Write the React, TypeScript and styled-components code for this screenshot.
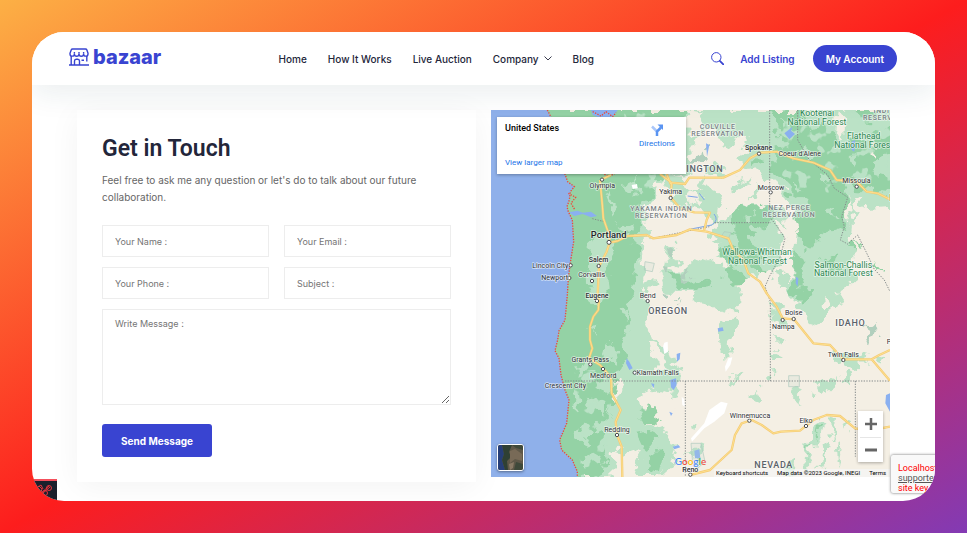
import React from "react";
import styled, { createGlobalStyle } from "styled-components";

const GlobalStyle = createGlobalStyle`
  *, *::before, *::after { box-sizing: border-box; }
  body { margin: 0; font-family: Inter, "Liberation Sans", sans-serif; }
`;

const brand = "#3944d1";
const ink = "#23263a";

const Backdrop = styled.div`
  display: flex;
  min-height: 100vh;
  padding: 32px;
  background: linear-gradient(to bottom right, #fcb045, #fd1d1d, #833ab4);
`;

const Frame = styled.div`
  position: relative;
  flex: 1;
  min-width: 0;
  overflow: hidden;
  border-radius: 32px;
  background: #fff;
`;

const Header = styled.header`
  position: relative;
  z-index: 1;
  display: flex;
  align-items: center;
  justify-content: space-between;
  height: 53px;
  padding: 0 38px 0 37px;
  background: #fff;
  box-shadow: 0 8px 30px rgba(20, 70, 80, 0.09);
`;

const Logo = styled.a`
  display: flex;
  align-items: center;
  gap: 4px;
  margin-bottom: 3px;
  color: ${brand};
  font: 800 20px/26px Inter, sans-serif;
  text-decoration: none;
`;

const Nav = styled.nav`
  display: flex;
  align-items: center;
  gap: 21px;
`;

const NavLink = styled.a`
  display: flex;
  align-items: center;
  gap: 5px;
  color: ${ink};
  font: 500 10px/16px Inter, sans-serif;
  text-decoration: none;
`;

const Actions = styled.div`
  display: flex;
  align-items: center;
`;

const IconButton = styled.button`
  display: flex;
  margin-right: 16px;
  padding: 0;
  border: 0;
  background: none;
  color: ${brand};
`;

const ListingLink = styled(NavLink)`
  margin-right: 18px;
  color: ${brand};
  font-weight: 600;
`;

const AccountButton = styled.button`
  height: 27px;
  padding: 0 13px;
  border: 0;
  border-radius: 14px;
  background: ${brand};
  color: #fff;
  font: 600 10px/16px Inter, sans-serif;
`;

const Main = styled.main`
  display: grid;
  grid-template-columns: 1fr 1fr;
  align-items: start;
  gap: 15px;
  padding: 25px 45px 19px;
`;

const ContactCard = styled.form`
  padding: 25px;
  background: #fff;
  box-shadow: 0 5px 30px rgba(0, 0, 0, 0.05);
`;

const Title = styled.h1`
  margin: 0;
  color: ${ink};
  font: 600 23px/28px Roboto, sans-serif;
`;

const Intro = styled.p`
  margin: 9px 0 19px;
  color: #666;
  font-size: 10px;
  line-height: 17px;
`;

const Fields = styled.div`
  display: grid;
  grid-template-columns: 1fr 1fr;
  gap: 10px 15px;
`;

const Field = styled.input`
  width: 100%;
  min-width: 0;
  height: 32px;
  padding: 0 12px;
  border: 1px solid #ededed;
  background: #fff;
  font: 9px/16px Inter, sans-serif;
  &::placeholder { color: #757575; }
`;

const MessageField = styled.textarea`
  grid-column: 1 / -1;
  display: block;
  width: 100%;
  height: 96px;
  padding: 6px 12px;
  border: 1px solid #ededed;
  background: #fff;
  font: 9px/16px Inter, sans-serif;
  resize: vertical;
  &::placeholder { color: #757575; }
`;

const SendButton = styled.button`
  display: block;
  height: 33px;
  margin-top: 19px;
  padding: 0 19px;
  border: 0;
  border-radius: 3px;
  background: ${brand};
  color: #fff;
  font: 700 10px/16px Inter, sans-serif;
`;

const MapPanel = styled.section`
  position: relative;
  overflow: hidden;
  font-family: Roboto, sans-serif;
`;

const MapDrawing = styled.svg`
  display: block;
  width: 100%;
  height: auto;
  font-family: Roboto, sans-serif;
`;

const PlaceCard = styled.div`
  position: absolute;
  top: 7px;
  left: 6px;
  display: flex;
  align-items: flex-start;
  justify-content: space-between;
  width: 189px;
  height: 57px;
  padding: 6px 11px 6px 8px;
  background: #fff;
  box-shadow: 0 1px 3px rgba(0, 0, 0, 0.3);
`;

const PlaceText = styled.div`
  display: flex;
  flex-direction: column;
  align-items: flex-start;
  justify-content: space-between;
  height: 100%;
`;

const PlaceName = styled.strong`
  font-size: 9px;
  font-weight: 500;
  line-height: 11px;
`;

const MapLink = styled.a`
  display: flex;
  flex-direction: column;
  align-items: center;
  gap: 2px;
  color: #1a73e8;
  font-size: 8px;
  line-height: 10px;
  text-decoration: none;
`;

const ZoomControls = styled.div`
  position: absolute;
  right: 7px;
  bottom: 15px;
  display: grid;
  grid-template-rows: 1fr 1fr;
  width: 25px;
  height: 51px;
  padding: 0 2px;
  background: #fff;
  box-shadow: 0 1px 3px rgba(0, 0, 0, 0.3);
`;

const ZoomButton = styled.button`
  display: grid;
  place-items: center;
  padding: 0;
  border: 0;
  background: none;
  color: #666;
  & + & { border-top: 1px solid #e6e6e6; }
`;

const SatelliteButton = styled.button`
  position: absolute;
  left: 6px;
  bottom: 6px;
  display: block;
  width: 27px;
  height: 27px;
  padding: 0;
  overflow: hidden;
  border: 1px solid #fff;
  border-radius: 3px;
  box-shadow: 0 1px 3px rgba(0, 0, 0, 0.4);
`;

const GoogleLink = styled.a`
  position: absolute;
  bottom: 10px;
  left: 50%;
  transform: translateX(-50%);
  font: 500 10px/12px Lato, sans-serif;
  text-decoration: none;
  text-shadow: 0 0 1px #fff;
`;

const Letter = styled.span<{ $color: string }>`
  color: ${(p) => p.$color};
`;

const Attribution = styled.div`
  position: absolute;
  right: 0;
  bottom: 0;
  display: flex;
  gap: 9px;
  padding: 0 4px 0 2px;
  background: rgba(245, 245, 245, 0.75);
  font-size: 6px;
  line-height: 8px;
`;

const PlainButton = styled.button`
  padding: 0;
  border: 0;
  background: none;
  color: #000;
  font: inherit;
`;

const TermsLink = styled.a`
  color: #000;
  text-decoration: none;
`;

const CaptchaBadge = styled.aside`
  position: absolute;
  right: -170px;
  bottom: 8px;
  width: 214px;
  height: 38px;
  padding: 8px 7px 0;
  overflow: hidden;
  border-radius: 2px;
  background: #f9f9f9;
  box-shadow: 0 0 3px #666;
  color: #f00;
  font: 9px/10px Roboto, sans-serif;
`;

const CaptchaLink = styled.a`
  display: block;
  color: #555;
`;

const DebugBadge = styled.button`
  position: absolute;
  left: 0;
  bottom: 0;
  display: block;
  width: 25px;
  height: 22px;
  padding: 0;
  border: 0;
  border-top: 2px solid #f4505c;
  background: #1b202c;
`;

function StoreIcon() {
  return (
    <svg width="20" height="18" viewBox="0 0 20 18" fill="none" stroke="currentColor" strokeWidth="1.4" strokeLinejoin="round" aria-hidden="true">
      <path d="M3.5 1h13q1 0 1.4 1L19 5.2v.7a2.2 2.2 0 0 1-4.4 0 2.2 2.2 0 0 1-4.6 0 2.2 2.2 0 0 1-4.6 0 2.2 2.2 0 0 1-4.4 0v-.7L2.2 2q.4-1 1.3-1Z" />
      <path d="M5.4 5.4V4M10 5.4V4M14.6 5.4V4M2.2 8v8.8M17.8 8v5.500M0 17h20M5.5 17v-4q0-1.800 1.700-1.800h1.600q1.700 0 1.700 1.800v4M12.500 12.300h2.500" />
    </svg>
  );
}

function SearchIcon() {
  return (
    <svg width="13" height="13" viewBox="0 0 13 13" fill="none" stroke="currentColor" aria-hidden="true">
      <circle cx="5.300" cy="5.300" r="4.700" strokeWidth="1" />
      <path d="m8.800 8.800 3.500 3.500" strokeWidth="1.800" strokeLinecap="round" />
    </svg>
  );
}

const landLight = [
  "M60 0H600L640 60 590 130 600 190 520 200 500 240 470 300 480 370 450 400 458 480 500 520 460 545 466 640 484 690 540 720 572 800 560 860 490 836 440 860 455 920 520 960 560 1010 545 1060 500 1101H60Z",
  "M832 0H1240V290L1127 300 1100 262 1085 330 1077 400 1157 480 1127 490 1050 540 1027 600 957 650 917 585 890 510 915 420 925 340 880 250 830 205 800 176 760 180 745 150 777 96 750 0Z",
  "M590 0H750L770 70 740 80 720 110 690 100 670 60 640 50 610 20Z",
  "M515 195 570 200 590 245 650 235 655 300 600 290 570 305 540 270Z",
  "M640 190 660 230 690 290 680 350 650 350 640 290Z",
  "M677 350 730 300 760 290 860 285 890 320 885 400 860 480 800 470 790 520 740 512 700 450 650 430Z",
  "M497 470 570 492 620 445 690 470 750 530 755 580 700 605 640 590 600 545 520 545Z",
  "M530 400 560 395 545 450 570 465 520 480Z",
  "M837 570 868 600 900 640 870 655 845 640Z M850 672 865 695 880 705 850 715Z M842 722 875 738 860 760 840 750Z M838 776 850 780 846 805 838 800Z",
  "M1020 720 1060 735 1130 730 1100 790 1055 770 1030 750Z M1157 735 1190 745 1170 775Z M1057 790 1075 785 1080 815 1060 810Z",
  "M990 820 1040 795 1020 830 995 848 965 840Z M910 830 935 835 925 890 915 870 900 840Z",
  "M690 650 725 610 735 640 720 720 695 745 690 700Z M780 845 805 840 790 880 778 865Z M720 795 740 800 725 818Z",
  "M975 935 1000 930 985 985 965 1000 960 1060 940 1085 950 1000Z M1020 925 1035 930 1030 990 1015 960Z M995 1010 1012 990 1000 1075 985 1085Z M1060 925 1080 930 1072 965Z M1040 1010 1055 1000 1045 1070Z",
  "M603 945 615 930 610 960Z M598 1030 640 1000 625 1060Z M880 1070 910 1050 905 1095 880 1100Z",
  "M840 450 870 440 850 500 835 520Z M860 500 875 480 900 530 880 550Z M1140 560 1170 560 1180 590 1150 580Z",
  "M750 210 770 205 740 245 720 240Z M670 150 700 180 680 200 640 180Z M795 225 810 245 785 265Z",
];

const landDark = [
  "M60 0H590L560 80 530 190 500 215 480 260 450 300 470 338 434 390 445 440 425 500 430 560 408 600 414 650 390 700 400 760 370 805 390 860 362 890 365 930 340 985 350 1040 320 1101H60Z",
  "M833 0H940L960 60 1010 40 1030 90 1060 110 1090 80 1130 110 1150 60 1240 70V130L1130 150 1160 200 1240 210V250L1110 240 1080 200 1060 240 1080 290 1050 350 1000 370 960 410 925 380 910 320 950 290 900 260 870 200 835 175 850 130 900 105 860 70Z",
  "M730 300 780 290 850 285 860 320 810 350 780 340 775 380 800 430 820 480 790 485 750 430 710 460 690 440 740 390 720 350Z",
  "M540 500 575 495 600 515 650 500 660 530 600 540 560 530Z M720 465 750 480 760 515 720 520 700 495Z",
  "M900 460 920 430 960 450 930 500 940 540 905 550Z M1060 390 1110 400 1150 450 1175 480 1130 470Z M1000 450 1030 430 1050 480 1010 490Z",
  "M905 505 930 540 965 545 940 590 920 580Z M1100 0H1170L1140 40 1110 35Z M780 150 820 140 790 165Z",
  "M440 900 480 885 500 930 450 925Z M430 965 480 960 500 1000 455 1010Z M470 1030 520 1035 510 1080 465 1090Z",
  "M750 360 800 370 770 410Z M975 950 990 940 970 990Z M955 1010 962 1000 950 1050Z",
];

const lightGaps = [
  "M300 395 360 372 368 440 345 480 350 550 330 600 304 575 292 500Z",
  "M292 655 322 650 310 680Z M340 740 355 695 370 720 378 760Z M258 770 290 760 300 790 250 800Z",
  "M310 810 350 800 365 840 330 850Z M290 860 330 870 340 910 300 890Z M325 930 360 900 370 960 350 990 310 970Z M240 860 262 850 270 900 245 880Z",
  "M380 350 420 340 405 375Z M390 220 430 200 445 240 410 250Z M385 600 410 585 398 630Z M350 250 375 290 365 320Z",
  "M910 120 960 130 950 160Z M980 190 1020 200 1010 230 985 220Z M900 220 940 240 920 260Z M1080 130 1110 150 1090 180Z M870 20 890 40 880 60Z M1000 300 1030 290 1040 330Z",
  "M760 320 790 315 775 335Z M270 950 300 960 290 1010 260 990Z M280 1040 330 1030 340 1060 290 1070Z",
];

const sandGaps = [
  "M588 0 640 8 625 60 590 90Z M610 100 740 115 700 150 600 165Z",
  "M362 820 382 815 392 860 370 870Z M362 1020 380 1010 400 1040 430 1020 445 1050 425 1101H365Z",
  "M1060 550 1070 530 1100 560 1110 590 1060 600Z M1090 400 1150 420 1165 520 1197 540V600L1130 600 1080 520Z",
  "M1040 10 1060 30 1055 80 1035 70Z M1145 100 1160 110 1150 135Z M1075 260 1085 300 1070 350 1058 320Z",
  "M997 570 1010 555 1020 600 1000 600Z M480 430 490 460 470 520 465 480Z M470 700 500 710 530 770 500 790Z M500 850 550 880 560 930 520 900Z",
  "M870 340 890 350 880 440 860 430Z M580 250 620 255 630 285 590 280Z M640 400 690 400 700 430 650 450Z",
];

const reserve = [
  "M590 160 640 118 648 150 620 162Z M548 395 556 400 550 430 535 450 530 430Z M525 465 545 475 535 500 520 495Z",
  "M515 545 540 550 530 570 518 560Z M1120 650 1150 630 1160 660 1140 700 1130 690 1145 665Z M585 480 598 485 590 520 580 510Z M535 570 560 570 555 582Z",
];

const coast =
  "M169 0 200 60 215 140 222 193 230 215 250 230 238 245 235 270 228 290 232 305 244 330 248 395 237 465 232 505 229 555 222 630 204 662 200 690 192 722 204 745 210 795 222 840 234 870 227 940 206 990 212 1020 244 1050 259 1085 259 1101";

const roads = [
  "M327 210 334 285 337 325 353 370 357 395 347 425 324 470 320 555 324 570 322 600 307 620 297 650 297 690 304 715 294 745 327 765 360 802 362 850 389 900 374 935 378 975 392 1010 394 1101",
  "M355 398 380 393 410 378 467 375 487 385 515 381 557 375 597 358 647 365 712 385 727 420 757 450 772 490 807 515 827 550 857 590 875 625 909 628 967 700 1017 705 1057 748 1142 748 1165 735 1197 720",
  "M1142 748 1197 812",
  "M507 192 542 218 582 222 595 203 697 203 747 180 777 145 807 128 857 125 907 145 967 158 1017 180 1037 210 1097 215 1127 245 1160 250 1197 268",
  "M360 195 330 209 M542 218 539 262 567 295 610 307 657 308 647 330 639 362 M539 222 527 192",
  "M597 1095 657 1080 722 1020 732 975 752 940 782 930 812 945 847 970 870 965 927 962 967 930 1007 915 1047 918 1092 955 1127 960 1160 957 1197 950",
];

const borders = [
  "M222 813H1197 M836 0V320L860 352 882 385 868 440 835 500 822 530 838 575V813",
  "M920 0V90L955 150 1010 195 1030 235 1070 262 1052 320 1060 350 1048 390 1070 402 1100 375 1125 425 1150 478 1180 510 1197 545",
  "M671 338H840 M583 813V1101 M1093 813V1040 M357 370 340 335 300 325 M487 385 557 370 655 350",
];

interface Place {
  name: string;
  x: number;
  y: number;
  marker?: [number, number];
  prominent?: boolean;
}

const places: Place[] = [
  { name: "Olympia", x: 334, y: 234, marker: [333, 209] },
  { name: "Yakima", x: 539, y: 253, marker: [539, 264] },
  { name: "Spokane", x: 803, y: 121, marker: [804, 131], prominent: true },
  { name: "Coeur d'Alene", x: 926, y: 137 },
  { name: "Missoula", x: 1096, y: 219, marker: [1097, 230] },
  { name: "Moscow", x: 840, y: 239, marker: [839, 247] },
  { name: "Salem", x: 323, y: 457, marker: [323, 468], prominent: true },
  { name: "Lincoln City", x: 178, y: 473, marker: [239, 466] },
  { name: "Newport", x: 191, y: 511, marker: [235, 504] },
  { name: "Corvallis", x: 302, y: 502, marker: [303, 513] },
  { name: "Eugene", x: 318, y: 563, marker: [318, 573], prominent: true },
  { name: "Bend", x: 470, y: 563, marker: [470, 573] },
  { name: "Grants Pass", x: 298, y: 755, marker: [298, 763] },
  { name: "Medford", x: 337, y: 803, marker: [336, 777] },
  { name: "Klamath Falls", x: 500, y: 796, marker: [431, 788] },
  { name: "Crescent City", x: 223, y: 834 },
  { name: "Redding", x: 378, y: 965, marker: [378, 975] },
  { name: "Boise", x: 908, y: 616, marker: [908, 627] },
  { name: "Nampa", x: 877, y: 656, marker: [875, 630] },
  { name: "Twin Falls", x: 1057, y: 741, marker: [1057, 750] },
  { name: "Winnemucca", x: 777, y: 924, marker: [775, 932] },
  { name: "Elko", x: 945, y: 940, marker: [945, 948] },
  { name: "Reno", x: 598, y: 1085, marker: [598, 1094], prominent: true },
];

const regions: [string, number, number][] = [
  ["COLVILLE", 680, 58],
  ["RESERVATION", 680, 79],
  ["YAKAMA INDIAN", 511, 303],
  ["RESERVATION", 511, 324],
  ["NEZ PERCE", 895, 299],
  ["RESERVATION", 894, 320],
  ["INDI", 1172, 8],
  ["RESERV", 1160, 29],
];

const forests: [string, number, number][] = [
  ["Kootenai", 978, 18],
  ["National Forest", 978, 45],
  ["Flathead", 1118, 87],
  ["National Fores", 1114, 113],
  ["Wallowa-Whitman", 798, 435],
  ["National Forest", 799, 461],
  ["Salmon-Challis", 1057, 473],
  ["National Forest", 1057, 499],
  ["H", 1203, 273],
];

const states: [string, number, number][] = [
  ["WASHINGTON", 599, 186],
  ["OREGON", 531, 613],
  ["IDAHO", 1078, 649],
  ["NEVADA", 848, 1073],
];

function RegionMap() {
  return (
    <MapDrawing viewBox="0 0 1197 1101" role="img" aria-label="Map of the north-western United States">
      <defs>
        <filter id="rough" x="0" y="0" width="1240" height="1101" filterUnits="userSpaceOnUse" colorInterpolationFilters="sRGB">
          <feTurbulence type="fractalNoise" baseFrequency="0.025" numOctaves="3" seed="7" />
          <feDisplacementMap in="SourceGraphic" scale="64" xChannelSelector="R" yChannelSelector="G" />
        </filter>
        <filter id="relief" x="0" y="0" width="1197" height="1101" filterUnits="userSpaceOnUse" colorInterpolationFilters="sRGB">
          <feTurbulence type="fractalNoise" baseFrequency="0.022" numOctaves="3" seed="21" />
          <feColorMatrix values="0 0 0 0 0.73  0 0 0 0 0.886  0 0 0 0 0.776  14 0 0 0 -8.4" />
          <feComposite in2="SourceAlpha" operator="in" />
        </filter>
      </defs>
      <rect width="1197" height="1101" fill="#f4efe4" />
      <g filter="url(#rough)">
        <path d={landLight.join("")} fill="#bbe2c6" />
        <path d={landDark.join("")} fill="#94d2a5" />
        <path d={lightGaps.join("")} fill="#bbe2c6" />
        <path d={sandGaps.join("")} fill="#f4efe4" />
        <path d={reserve.join("")} fill="#b1cfbd" />
      </g>
      <path d="M850 0H1197V220L1060 240 960 270 850 180ZM400 0H500V190L440 300 400 300ZM250 780 370 780 340 1101H270Z" filter="url(#relief)" />
      <path d={coast + "H0V0Z"} fill="#8fb0ea" />
      <g fill="#8ab0f0">
        <path d="M300 0H380L365 22 330 25 305 15ZM880 70 905 50 900 62 912 72 895 88ZM1082 95 1092 90 1090 125 1082 120ZM232 307 260 302 275 308 300 305 318 318 300 322 275 312 250 318ZM407 745 415 755 425 775 415 780 405 760ZM557 732 568 728 566 748 558 755ZM538 810 555 805 557 825 548 840 540 832ZM518 708 528 710 526 728 518 720ZM610 1022 625 1018 628 1045 612 1045ZM1185 855 1197 850V905L1183 880ZM680 655 695 652 698 662 682 665ZM545 1010 562 1005 568 1012 550 1018ZM915 500 922 505 920 530 914 520ZM480 820 490 822 488 835ZM645 100 655 105 648 140ZM535 905 545 910 540 918Z" />
      </g>
      <path d="M669 312Q685 330 662 345L600 357M590 258 620 262M625 250 640 270" fill="none" stroke="#7ba3e8" strokeWidth="3" />
      <path d="M600 985 640 940 655 900 690 875 710 880 700 910 670 935 640 955 603 995ZM702 770 712 745 724 742 718 765 704 785ZM516 710 520 698 530 695 531 725 520 732ZM572 860 580 868 582 890 574 885ZM422 225 438 222 440 235 425 237Z" fill="#fff" />
      <path d="M893 797H925V830H893ZM600 1000H630L642 1055 620 1075 605 1060ZM462 455 490 460 484 485 460 480ZM690 380 700 365 720 368 710 390Z" fill="#bcd8cc" fillOpacity="0.2" stroke="#adc9bd" strokeWidth="2" />
      <path d={coast} fill="none" stroke="#ed4a3c" strokeWidth="4" strokeDasharray="4 4" />
      <path d="M305 5 330 18 345 5 365 20 375 8M340 193 355 199 372 190M232 250 254 262 240 280 252 300" fill="none" stroke="#ed4a3c" strokeWidth="4" strokeDasharray="4 4" />
      <path d={borders.join("")} fill="none" stroke="#858b8b" strokeWidth="3" strokeDasharray="4 4" />
      <g fill="none" strokeLinejoin="round">
        <path d={roads.join("")} stroke="#f5cb74" strokeWidth="7" />
        <path d={roads.join("")} stroke="#fde08f" strokeWidth="3" />
      </g>
      <g fill="#fff" stroke="#4c4f52" strokeWidth="3">
        {places.map(({ name, marker }) => marker && <circle key={name} cx={marker[0]} cy={marker[1]} r="5" />)}
        <circle cx="354" cy="397" r="6" />
      </g>
      <g textAnchor="middle" paintOrder="stroke" stroke="#ffffff" strokeOpacity="0.6" strokeWidth="5" strokeLinejoin="round">
        {states.map(([name, x, y]) => (
          <text key={name} x={x} y={y} fontSize="27" letterSpacing="2" fontWeight="500" fill="#5b626a">{name}</text>
        ))}
        {regions.map(([name, x, y]) => (
          <text key={name + y} x={x} y={y} fontSize="21" letterSpacing="2" fontWeight="500" fill="#7b8286">{name}</text>
        ))}
        {forests.map(([name, x, y]) => (
          <text key={name + y} x={x} y={y} fontSize="26" fill="#2c8751">{name}</text>
        ))}
        {places.map(({ name, x, y, prominent }) => (
          <text key={name} x={x} y={y} fontSize="21" fontWeight={prominent ? 500 : 400} fill="#303236">{name}</text>
        ))}
        <text x="353" y="385" fontSize="28" fontWeight="500" fill="#25272a">Portland</text>
        <text x="1194" y="703" fontSize="21" fill="#303236">P</text>
      </g>
    </MapDrawing>
  );
}

const googleLetters: [string, string][] = [
  ["G", "#4285f4"], ["o", "#ea4335"], ["o", "#fbbc05"], ["g", "#4285f4"], ["l", "#34a853"], ["e", "#ea4335"],
];

export default function App() {
  return (
    <Backdrop>
      <GlobalStyle />
      <Frame>
        <Header>
          <Logo href="#"><StoreIcon />bazaar</Logo>
          <Nav>
            <NavLink href="#">Home</NavLink>
            <NavLink href="#">How It Works</NavLink>
            <NavLink href="#">Live Auction</NavLink>
            <NavLink href="#">
              Company
              <svg width="8" height="5" viewBox="0 0 8 5" fill="none" stroke="currentColor" strokeWidth="0.9" aria-hidden="true"><path d="m.5.5 3.500 3.500L7.500.5" /></svg>
            </NavLink>
            <NavLink href="#">Blog</NavLink>
          </Nav>
          <Actions>
            <IconButton type="button" aria-label="Search"><SearchIcon /></IconButton>
            <ListingLink href="#">Add Listing</ListingLink>
            <AccountButton type="button">My Account</AccountButton>
          </Actions>
        </Header>
        <Main>
          <ContactCard onSubmit={(e) => e.preventDefault()}>
            <Title>Get in Touch</Title>
            <Intro>Feel free to ask me any question or let's do to talk about our future collaboration.</Intro>
            <Fields>
              <Field aria-label="Your Name" placeholder="Your Name :" />
              <Field aria-label="Your Email" type="email" placeholder="Your Email :" />
              <Field aria-label="Your Phone" type="tel" placeholder="Your Phone :" />
              <Field aria-label="Subject" placeholder="Subject :" />
              <MessageField aria-label="Write Message" placeholder="Write Message :" />
            </Fields>
            <SendButton type="submit">Send Message</SendButton>
          </ContactCard>
          <MapPanel aria-label="Location">
            <RegionMap />
            <PlaceCard>
              <PlaceText>
                <PlaceName>United States</PlaceName>
                <MapLink href="#">View larger map</MapLink>
              </PlaceText>
              <MapLink href="#">
                <svg width="14" height="14" viewBox="0 0 14 14" fill="none" aria-hidden="true">
                  <path d="M2 3.500 6.500 8" stroke="#a9c7fa" strokeWidth="2.500" />
                  <path d="M7 13V8.500L11 4.500" stroke="#5a94f2" strokeWidth="2.500" />
                  <path d="M7.500 1.500H13V7Z" fill="#5a94f2" />
                </svg>
                Directions
              </MapLink>
            </PlaceCard>
            <SatelliteButton type="button" aria-label="Show satellite imagery">
              <svg width="25" height="25" viewBox="0 0 25 25" aria-hidden="true">
                <rect width="25" height="25" fill="#5f5848" />
                <path d="M0 0H4L6 9 4 15 7 25H0Z" fill="#263e78" />
                <path d="M4 0H14L11 7 13 12 9 16 10 25H7L4 15 6 9Z" fill="#2f4034" />
                <path d="M12 6 17 4 24 9V16L17 14 12 18Z" fill="#786a57" />
                <path d="M14 0H25V5L18 3ZM18 17 25 19V25H16Z" fill="#3f493a" />
                <path d="M11 19 16 17 15 23 12 25Z" fill="#8a7a66" />
              </svg>
            </SatelliteButton>
            <ZoomControls>
              <ZoomButton type="button" aria-label="Zoom in">
                <svg width="12" height="12" viewBox="0 0 12 12" aria-hidden="true"><path d="M0 6H12M6 0V12" stroke="currentColor" strokeWidth="2.500" /></svg>
              </ZoomButton>
              <ZoomButton type="button" aria-label="Zoom out">
                <svg width="12" height="12" viewBox="0 0 12 12" aria-hidden="true"><path d="M0 6H12" stroke="currentColor" strokeWidth="3" /></svg>
              </ZoomButton>
            </ZoomControls>
            <GoogleLink href="#" aria-label="Google">
              {googleLetters.map(([letter, color], i) => (
                <Letter key={i} $color={color}>{letter}</Letter>
              ))}
            </GoogleLink>
            <Attribution>
              <PlainButton type="button">Keyboard shortcuts</PlainButton>
              <span>Map data ©2023 Google, INEGI</span>
              <TermsLink href="#">Terms</TermsLink>
            </Attribution>
          </MapPanel>
        </Main>
        <DebugBadge type="button" aria-label="Debug toolbar">
          <svg width="25" height="20" viewBox="0 0 25 20" fill="none" stroke="#e8343c" aria-hidden="true">
            <path d="m3 8 4-3 3 3-2 6M6 6l3-2 2 4M8 13l9-8M11 12l7-6" />
            <circle cx="17" cy="7" r="2.500" />
            <circle cx="13" cy="12" r="2.500" />
          </svg>
        </DebugBadge>
        <CaptchaBadge>
          Localhost is not in the list of
          <CaptchaLink href="#">supported domains</CaptchaLink>
          site key
        </CaptchaBadge>
      </Frame>
    </Backdrop>
  );
}
